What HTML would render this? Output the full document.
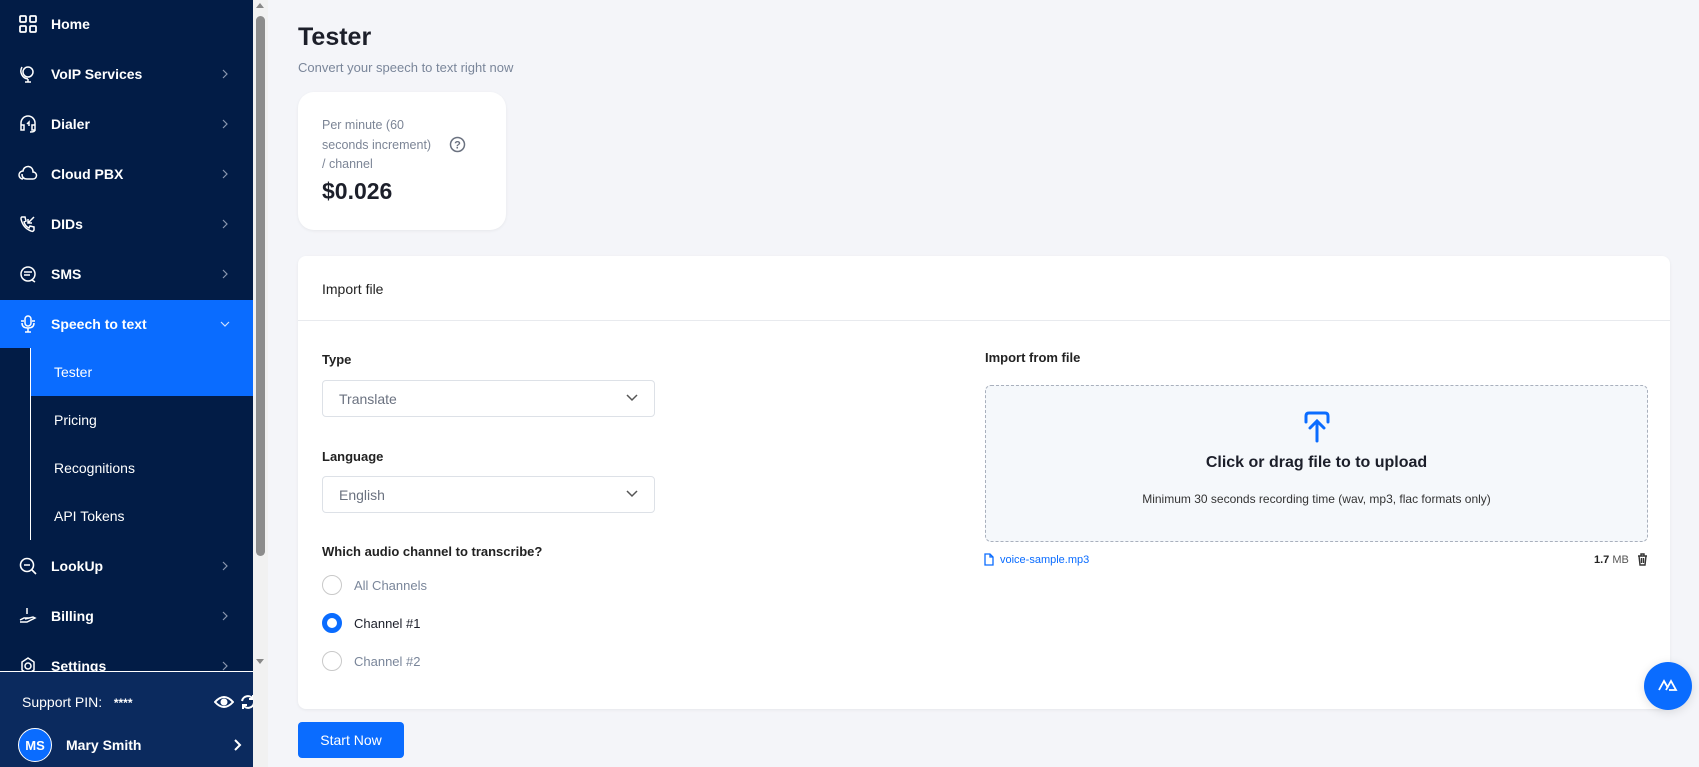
<!DOCTYPE html>
<html><head><meta charset="utf-8"><style>
*{box-sizing:border-box;margin:0;padding:0}
body{width:1699px;height:767px;overflow:hidden;background:#f4f5f9;font-family:"Liberation Sans",sans-serif;position:relative}
.sb{position:absolute;left:0;top:0;width:253px;height:767px;background:#021c46;color:#fff}
.nav{position:absolute;left:0;width:253px;height:48px;display:flex;align-items:center;font-size:14px;font-weight:bold}
.nav svg.i{position:absolute;left:18px;width:20px;height:20px}
.nav span{position:absolute;left:51px}
.nav .ch{position:absolute;left:220px;width:10px;height:10px}
.sub{position:absolute;left:31px;width:222px;height:48px;display:flex;align-items:center;padding-left:23px;font-size:14px}
.scroll{position:absolute;left:253px;top:0;width:15px;height:767px;background:#f1f1f1}
.main{position:absolute;left:268px;top:0}
.card{position:absolute;background:#fff;border-radius:16px;box-shadow:0 1px 3px rgba(0,0,0,.06)}
.lbl{position:absolute;font-size:13px;font-weight:bold;color:#222}
.sel{position:absolute;left:322px;width:333px;height:37px;border:1px solid #dde1e7;border-radius:4px;background:#fff;font-size:14px;color:#6b7280;padding:10px 16px}
.sel svg{position:absolute;right:16px;top:13px}
.rad{position:absolute;left:322px;width:20px;height:20px;border-radius:50%;border:1.5px solid #c9c9c9;background:#fff}
.rt{position:absolute;left:354px;font-size:13px;color:#7a869a}
</style></head><body>
<div class="sb">
  <div class="nav" style="top:0"><svg class="i" viewBox="0 0 20 20" fill="none" stroke="#fff" stroke-width="1.8"><rect x="2" y="2" width="6" height="6" rx="1"/><rect x="12" y="2" width="6" height="6" rx="1"/><rect x="2" y="12" width="6" height="6" rx="1"/><rect x="12" y="12" width="6" height="6" rx="1"/></svg><span>Home</span></div>
  <div class="nav" style="top:50px"><svg class="i" viewBox="0 0 20 20" fill="none" stroke="#fff" stroke-width="1.5"><circle cx="10" cy="8" r="5"/><path d="M4 3a8 8 0 0 0 6 12M10 15v3M7 18h6"/></svg><span>VoIP Services</span><svg class="ch" viewBox="0 0 10 10" fill="none" stroke="#8a97b0" stroke-width="1.2"><path d="M3 1l4 4-4 4"/></svg></div>
  <div class="nav" style="top:100px"><svg class="i" viewBox="0 0 20 20" fill="none" stroke="#fff" stroke-width="1.5"><path d="M3 13V9a7 7 0 0 1 14 0v4M3 11h3v5H3zM14 11h3v5h-3zM17 16q0 2-5 2"/><path d="M9 10l2-2v4"/></svg><span>Dialer</span><svg class="ch" viewBox="0 0 10 10" fill="none" stroke="#8a97b0" stroke-width="1.2"><path d="M3 1l4 4-4 4"/></svg></div>
  <div class="nav" style="top:150px"><svg class="i" viewBox="0 0 20 20" fill="none" stroke="#fff" stroke-width="1.5"><path d="M5 15a4 4 0 0 1 0-8 5 5 0 0 1 10 1 3.5 3.5 0 0 1 0 7H9"/><path d="M4 10q0 5 5 5"/></svg><span>Cloud PBX</span><svg class="ch" viewBox="0 0 10 10" fill="none" stroke="#8a97b0" stroke-width="1.2"><path d="M3 1l4 4-4 4"/></svg></div>
  <div class="nav" style="top:200px"><svg class="i" viewBox="0 0 20 20" fill="none" stroke="#fff" stroke-width="1.5"><path d="M4 3l3 0 1 4-2 1q1 4 5 6l1-2 4 1v3q-1 2-3 1Q5 14 3 5q0-2 1-2zM16 3l-6 6M10 5v4h4"/></svg><span>DIDs</span><svg class="ch" viewBox="0 0 10 10" fill="none" stroke="#8a97b0" stroke-width="1.2"><path d="M3 1l4 4-4 4"/></svg></div>
  <div class="nav" style="top:250px"><svg class="i" viewBox="0 0 20 20" fill="none" stroke="#fff" stroke-width="1.5"><circle cx="10" cy="10" r="7"/><path d="M6 8h8M6 11h6"/><path d="M14 16l3 2"/></svg><span>SMS</span><svg class="ch" viewBox="0 0 10 10" fill="none" stroke="#8a97b0" stroke-width="1.2"><path d="M3 1l4 4-4 4"/></svg></div>
  <div class="nav" style="top:300px;background:#0a6cff"><svg class="i" viewBox="0 0 20 20" fill="none" stroke="#fff" stroke-width="1.5"><rect x="7" y="2" width="6" height="10" rx="3"/><path d="M4 9q0 5 6 5 6 0 6-5M10 14v4M7 18h6M3 7h3M14 7h3"/></svg><span>Speech to text</span><svg class="ch" viewBox="0 0 10 10" fill="none" stroke="#cfe0ff" stroke-width="1.2"><path d="M1 3l4 4 4-4"/></svg></div>
  <div style="position:absolute;left:30px;top:348px;width:1px;height:192px;background:#fff"></div>
  <div class="sub" style="top:348px;background:#0a6cff">Tester</div>
  <div class="sub" style="top:396px">Pricing</div>
  <div class="sub" style="top:444px">Recognitions</div>
  <div class="sub" style="top:492px">API Tokens</div>
  <div class="nav" style="top:542px"><svg class="i" viewBox="0 0 20 20" fill="none" stroke="#fff" stroke-width="1.6"><circle cx="9" cy="9" r="6.5"/><path d="M6 9h6M14 14l4 4"/></svg><span>LookUp</span><svg class="ch" viewBox="0 0 10 10" fill="none" stroke="#8a97b0" stroke-width="1.2"><path d="M3 1l4 4-4 4"/></svg></div>
  <div class="nav" style="top:592px"><svg class="i" viewBox="0 0 20 20" fill="none" stroke="#fff" stroke-width="1.5"><path d="M2 14l4-2h5l-4 1 8-2 2 1-8 4H2M9 2v6"/></svg><span>Billing</span><svg class="ch" viewBox="0 0 10 10" fill="none" stroke="#8a97b0" stroke-width="1.2"><path d="M3 1l4 4-4 4"/></svg></div>
  <div class="nav" style="top:642px"><svg class="i" viewBox="0 0 20 20" fill="none" stroke="#fff" stroke-width="1.5"><circle cx="10" cy="10" r="3"/><path d="M10 2l6 4v8l-6 4-6-4V6z"/></svg><span>Settings</span><svg class="ch" viewBox="0 0 10 10" fill="none" stroke="#8a97b0" stroke-width="1.2"><path d="M3 1l4 4-4 4"/></svg></div>
  <div style="position:absolute;left:0;top:671px;width:268px;height:96px;background:#0b2a5e;border-top:1px solid #fff">
    <div style="position:absolute;left:22px;top:22px;font-size:14px">Support PIN:&nbsp;&nbsp;&nbsp;<b style="font-size:12px">****</b></div>
    <svg style="position:absolute;left:214px;top:22px" width="20" height="16" viewBox="0 0 20 16" fill="none" stroke="#fff" stroke-width="2"><path d="M1 8q9-10 18 0-9 10-18 0z"/><circle cx="10" cy="8" r="2.5" fill="#fff"/></svg>
    <svg style="position:absolute;left:240px;top:22px" width="16" height="16" viewBox="0 0 16 16" fill="none" stroke="#fff" stroke-width="2"><path d="M2 7a6 6 0 0 1 11-2M14 9a6 6 0 0 1-11 2M13 1v4h-4M3 15v-4h4"/></svg>
    <div style="position:absolute;left:18px;top:56px;width:34px;height:34px;border-radius:50%;background:#0a6cff;border:1.5px solid #fff;font-size:13px;font-weight:bold;display:flex;align-items:center;justify-content:center">MS</div>
    <div style="position:absolute;left:66px;top:65px;font-size:14px;font-weight:bold">Mary Smith</div>
    <svg style="position:absolute;left:233px;top:67px" width="10" height="12" viewBox="0 0 10 12" fill="none" stroke="#fff" stroke-width="2"><path d="M2 1l5 5-5 5"/></svg>
  </div>
</div>
<div class="scroll"><div style="position:absolute;left:3px;top:16px;width:9px;height:540px;background:#8c8c8c;border-radius:5px"></div>
<div style="position:absolute;left:3px;top:3px;border:4px solid transparent;border-bottom:5px solid #888;border-top:0"></div>
<div style="position:absolute;left:3px;top:659px;border:4px solid transparent;border-top:5px solid #888;border-bottom:0"></div></div>

<div style="position:absolute;left:298px;top:23px;font-size:25px;font-weight:bold;color:#1c1f2a">Tester</div>
<div style="position:absolute;left:298px;top:60px;font-size:13px;color:#7a869a">Convert your speech to text right now</div>

<div class="card" style="left:298px;top:92px;width:208px;height:138px">
  <div style="position:absolute;left:24px;top:24px;font-size:12.5px;line-height:19.5px;color:#7c8596">Per minute (60<br>seconds increment)<br>/ channel</div>
  <svg style="position:absolute;left:151px;top:44px" width="17" height="17" viewBox="0 0 17 17"><circle cx="8.5" cy="8.5" r="7" fill="none" stroke="#6b7280" stroke-width="1.5"/><text x="8.5" y="12.5" text-anchor="middle" font-size="11" font-weight="bold" fill="#6b7280" font-family="Liberation Sans">?</text></svg>
  <div style="position:absolute;left:24px;top:86px;font-size:23px;font-weight:bold;color:#1c1f2a">$0.026</div>
</div>

<div class="card" style="left:298px;top:256px;width:1372px;height:453px;border-radius:8px">
  <div style="position:absolute;left:24px;top:25px;font-size:14px;color:#222">Import file</div>
  <div style="position:absolute;left:0;top:64px;width:100%;height:1px;background:#e8eaee"></div>
</div>
<div class="lbl" style="left:322px;top:352px">Type</div>
<div class="sel" style="top:380px">Translate<svg width="12" height="8" viewBox="0 0 12 8" fill="none" stroke="#555" stroke-width="1.5"><path d="M1 1l5 5 5-5"/></svg></div>
<div class="lbl" style="left:322px;top:449px">Language</div>
<div class="sel" style="top:476px">English<svg width="12" height="8" viewBox="0 0 12 8" fill="none" stroke="#555" stroke-width="1.5"><path d="M1 1l5 5 5-5"/></svg></div>
<div class="lbl" style="left:322px;top:544px">Which audio channel to transcribe?</div>
<div class="rad" style="top:575px"></div><div class="rt" style="top:578px">All Channels</div>
<div class="rad" style="top:613px;border:5.5px solid #0a6cff"></div><div class="rt" style="top:616px;color:#1c1f2a">Channel #1</div>
<div class="rad" style="top:651px"></div><div class="rt" style="top:654px">Channel #2</div>

<div class="lbl" style="left:985px;top:350px">Import from file</div>
<div style="position:absolute;left:985px;top:385px;width:663px;height:157px;border:1px dashed #a9b0bd;border-radius:6px;background:#f5f8fb">
  <svg style="position:absolute;left:316px;top:24px" width="30" height="34" viewBox="0 0 30 34" fill="none" stroke="#0a6cff" stroke-width="3" stroke-linecap="round"><path d="M4 12V6q0-3 3-3h16q3 0 3 3v6M15 31V12M8 18l7-7 7 7"/></svg>
  <div style="position:absolute;left:0;width:100%;top:68px;text-align:center;font-size:16px;font-weight:bold;color:#1c1f2a">Click or drag file to to upload</div>
  <div style="position:absolute;left:0;width:100%;top:106px;text-align:center;font-size:12px;color:#333">Minimum 30 seconds recording time (wav, mp3, flac formats only)</div>
</div>
<svg style="position:absolute;left:984px;top:553px" width="10" height="13" viewBox="0 0 10 13" fill="none" stroke="#0a6cff" stroke-width="1.3"><path d="M1 1h5l3 3v8H1zM6 1v3h3"/></svg>
<div style="position:absolute;left:1000px;top:554px;font-size:11px;color:#0a6cff">voice-sample.mp3</div>
<div style="position:absolute;left:1594px;top:554px;font-size:11px;color:#555"><b style="color:#222">1.7</b> MB</div>
<svg style="position:absolute;left:1637px;top:553px" width="11" height="13" viewBox="0 0 11 13" fill="none" stroke="#333" stroke-width="1.4"><path d="M1 3h9M4 3V1h3v2M2 3l1 9h5l1-9M4.5 5v5M6.5 5v5"/></svg>

<div style="position:absolute;left:298px;top:722px;width:106px;height:36px;background:#0a6cff;border-radius:4px;color:#fff;font-size:14px;display:flex;align-items:center;justify-content:center">Start Now</div>
<div style="position:absolute;left:1644px;top:662px;width:48px;height:48px;border-radius:50%;background:#0a6cff;box-shadow:0 2px 10px rgba(0,0,0,.12)"><svg style="position:absolute;left:14px;top:16px" width="20" height="14" viewBox="0 0 20 14" fill="none" stroke="#fff" stroke-width="1.8"><path d="M1 12L6 3l4 7M8 12L13 3l5 9H11"/></svg></div>
</body></html>
